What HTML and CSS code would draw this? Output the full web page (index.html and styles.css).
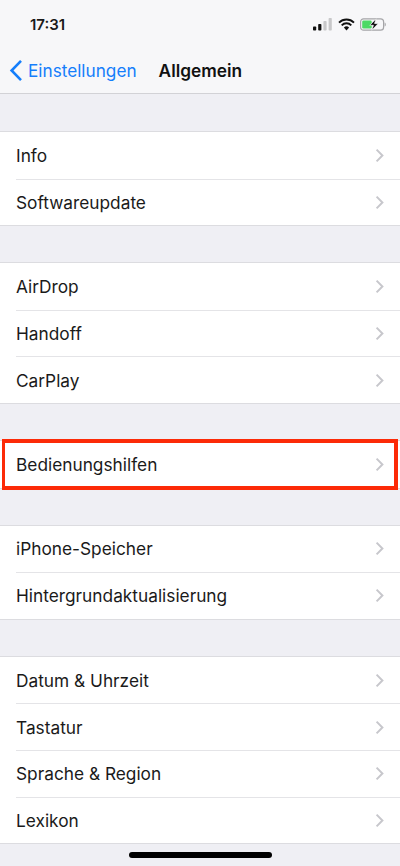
FILE: index.html
```html
<!DOCTYPE html>
<html lang="de">

<head>
    <meta charset="UTF-8">
    <meta name="viewport" content="width=device-width, initial-scale=1.0">
    <title>Allgemein</title>
    <link rel="stylesheet" href="styles.css">
</head>

<body>

    <svg class="svg-defs" width="0" height="0">
        <symbol id="chevron" viewBox="0 0 9 15">
            <path d="M1.6 1.6 7.4 7.5 1.6 13.4" fill="none" stroke="#c7c7cc" stroke-width="2" />
        </symbol>
    </svg>

    <header class="top-bar">
        <div class="status-bar">
            <span class="time">17:31</span>
            <div class="status-icons">
                <svg width="20" height="13" viewBox="0 0 20 13">
                    <rect x="0" y="8.5" width="3.2" height="4" rx="0.8" fill="#111" />
                    <rect x="5.2" y="6" width="3.2" height="6.5" rx="0.8" fill="#111" />
                    <rect x="10.4" y="3" width="3.2" height="9.5" rx="0.8" fill="#c8c8ca" />
                    <rect x="15.6" y="0" width="3.2" height="12.5" rx="0.8" fill="#c8c8ca" />
                </svg>
                <svg width="17" height="13" viewBox="0 0 17 13">
                    <path d="M1 4.6a10.6 10.6 0 0 1 15 0" fill="none" stroke="#111" stroke-width="1.9" />
                    <path d="M3.7 7.3a6.8 6.8 0 0 1 9.6 0" fill="none" stroke="#111" stroke-width="1.9" />
                    <path d="M8.5 12.4 5.9 9.6a3.7 3.7 0 0 1 5.2 0z" fill="#111" />
                </svg>
                <svg width="26" height="13" viewBox="0 0 26 13">
                    <rect x="0.6" y="0.8" width="23" height="11.4" rx="3" fill="none" stroke="#a5a5a8" stroke-width="1.2" />
                    <path d="M24.6 4.6c.8.2 1.2 1 1.2 1.9s-.4 1.7-1.2 1.9z" fill="#a5a5a8" />
                    <rect x="2.2" y="2.4" width="9.5" height="8.2" rx="1.4" fill="#4cd964" />
                    <path d="M16 0.8 9.8 7.3h3.6l-1.6 5 6.4-6.8h-3.6z" fill="#111" stroke="#f7f7f8" stroke-width="0.7" />
                </svg>
            </div>
        </div>
        <nav class="nav-bar">
            <a class="back-link" href="#">
                <svg width="14" height="23" viewBox="0 0 14 23">
                    <path d="M12 1.8 2.6 11.5l9.4 9.7" fill="none" stroke="#157efb" stroke-width="2.6" />
                </svg>
                <span>Einstellungen</span>
            </a>
            <h1 class="nav-title">Allgemein</h1>
        </nav>
    </header>

    <main>
        <ul class="group">
            <li class="row"><span>Info</span><svg class="chevron"><use href="#chevron" /></svg></li>
            <li class="row"><span>Softwareupdate</span><svg class="chevron"><use href="#chevron" /></svg></li>
        </ul>

        <ul class="group">
            <li class="row"><span>AirDrop</span><svg class="chevron"><use href="#chevron" /></svg></li>
            <li class="row"><span>Handoff</span><svg class="chevron"><use href="#chevron" /></svg></li>
            <li class="row"><span>CarPlay</span><svg class="chevron"><use href="#chevron" /></svg></li>
        </ul>

        <ul class="group">
            <li class="row row-marked"><span>Bedienungshilfen</span><svg class="chevron"><use href="#chevron" /></svg></li>
        </ul>

        <ul class="group">
            <li class="row"><span>iPhone-Speicher</span><svg class="chevron"><use href="#chevron" /></svg></li>
            <li class="row"><span>Hintergrundaktualisierung</span><svg class="chevron"><use href="#chevron" /></svg></li>
        </ul>

        <ul class="group">
            <li class="row"><span>Datum &amp; Uhrzeit</span><svg class="chevron"><use href="#chevron" /></svg></li>
            <li class="row"><span>Tastatur</span><svg class="chevron"><use href="#chevron" /></svg></li>
            <li class="row"><span>Sprache &amp; Region</span><svg class="chevron"><use href="#chevron" /></svg></li>
            <li class="row"><span>Lexikon</span><svg class="chevron"><use href="#chevron" /></svg></li>
        </ul>
    </main>

    <div class="home-indicator"></div>

</body>

</html>
```

FILE: styles.css
```css
/* Settings list */
html,
body {
    height: 100%;
}

body {
    position: relative;
    margin: 0;
    overflow: hidden;
    background-color: #efeff4;
    color: #1a1a1a;
    font-family: Inter, "Liberation Sans", sans-serif;
}

.svg-defs {
    position: absolute;
}

.top-bar {
    height: 94px;
    box-sizing: border-box;
    background-color: #f7f7f9;
    border-bottom: 1px solid #d2d2d6;
}

.status-bar {
    display: flex;
    justify-content: space-between;
    align-items: center;
    height: 49px;
    padding: 0 14px 0 30px;
}

.time {
    font-size: 15px;
    font-weight: 600;
}

.status-icons {
    display: flex;
    align-items: center;
    gap: 5px;
}

.nav-bar {
    display: flex;
    align-items: center;
    height: 43px;
    padding-left: 9px;
}

.back-link {
    display: flex;
    align-items: center;
    gap: 5px;
    color: #157efb;
    font-size: 17.2px;
    text-decoration: none;
}

.nav-title {
    margin: 0 0 0 22px;
    color: #111;
    font-size: 17.3px;
    font-weight: 600;
}

main {
    padding-top: 37px;
}

.group {
    margin: 0 0 36px;
    padding: 0;
    list-style: none;
    background-color: #fff;
    border-top: 1px solid #dcdce0;
    border-bottom: 1px solid #dcdce0;
}

.row {
    position: relative;
    display: flex;
    justify-content: space-between;
    align-items: center;
    height: 46.6px;
    box-sizing: border-box;
    margin-left: 16px;
    padding-right: 16px;
    font-size: 17.3px;
}

.row + .row {
    border-top: 1px solid #e4e4e7;
}

.chevron {
    width: 9px;
    height: 15px;
}

/* red frame lies over the row */
.row-marked::after {
    content: "";
    position: absolute;
    top: -2px;
    right: 2px;
    bottom: -2px;
    left: -14px;
    border-style: solid;
    border-color: #fc2a07;
    border-width: 4px 4px 4px 3px;
}

.home-indicator {
    position: absolute;
    left: 129px;
    bottom: 8px;
    width: 143px;
    height: 6px;
    border-radius: 3px;
    background-color: #000;
}
```
